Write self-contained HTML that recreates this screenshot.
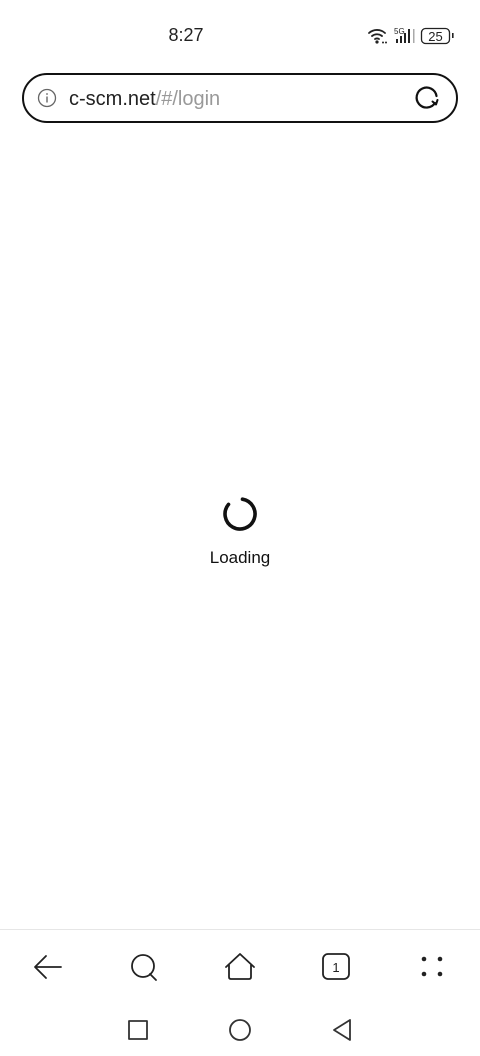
<!DOCTYPE html>
<html><head><meta charset="utf-8"><style>
html,body{margin:0;padding:0;background:#fff;}
body{width:480px;height:1056px;position:relative;overflow:hidden;font-family:"Liberation Sans",sans-serif;color:#111;}
.abs{position:absolute;}
</style></head><body>
<div class="abs" style="left:160px;top:25px;width:52px;text-align:center;font-size:18px;color:#222;">8:27</div>
<svg class="abs" style="left:366px;top:24px" width="92" height="22" viewBox="0 0 92 22">
 <g fill="none" stroke="#222" stroke-width="1.8" stroke-linecap="round">
  <path d="M3 9 A12 12 0 0 1 19 9"/><path d="M6 12 A8 8 0 0 1 16 12"/><path d="M9 15 A4 4 0 0 1 13 15"/>
 </g>
 <circle cx="11" cy="18" r="1.6" fill="#222"/><circle cx="17" cy="18.5" r="1" fill="#222"/><circle cx="20" cy="18.5" r="1" fill="#222"/>
 <text x="28" y="10" font-size="8" font-family="Liberation Sans" fill="#222">5G</text>
 <rect x="30" y="15" width="2" height="4" fill="#222"/><rect x="34" y="12" width="2" height="7" fill="#222"/><rect x="38" y="9" width="2" height="10" fill="#222"/><rect x="42" y="5" width="2" height="14" fill="#222"/>
 <rect x="47" y="5" width="1.5" height="14" fill="#aaa"/>
 <rect x="55.5" y="4.5" width="28" height="15" rx="4" fill="none" stroke="#222" stroke-width="1.3"/>
 <text x="69.5" y="17" font-size="13" text-anchor="middle" font-family="Liberation Sans" fill="#222">25</text>
 <rect x="86" y="9" width="1.6" height="5" fill="#222"/>
</svg>
<div class="abs" style="left:22px;top:73px;width:432px;height:46px;border:2px solid #111;border-radius:25px;"></div>
<svg class="abs" style="left:37px;top:88px" width="20" height="20" viewBox="0 0 20 20">
 <circle cx="10" cy="10" r="8.5" fill="none" stroke="#666" stroke-width="1.3"/>
 <rect x="9.3" y="8.5" width="1.4" height="6" fill="#666"/><circle cx="10" cy="6" r="0.9" fill="#666"/>
</svg>
<div class="abs" style="left:69px;top:88px;font-size:20px;color:#222;">c-scm.net<span style="color:#999">/#/login</span></div>
<svg class="abs" style="left:413px;top:84px" width="28" height="28" viewBox="0 0 28 28">
 <path d="M22 19 A10 10 0 1 1 23.5 12" fill="none" stroke="#111" stroke-width="2.2" stroke-linecap="round"/>
 <path d="M19.5 17.5 L23 20.5 L24.5 16" fill="none" stroke="#111" stroke-width="2" stroke-linecap="round" stroke-linejoin="round"/>
</svg>
<svg class="abs" style="left:220px;top:494px" width="40" height="40" viewBox="0 0 40 40">
 <path d="M22.5 5.2 A15 15 0 1 1 8.5 10.4" fill="none" stroke="#111" stroke-width="3.6" stroke-linecap="round"/>
</svg>
<div class="abs" style="left:180px;top:548px;width:120px;text-align:center;font-size:17px;color:#111;">Loading</div>
<div class="abs" style="left:0;top:929px;width:480px;height:1px;background:#e6e6e6;"></div>
<svg class="abs" style="left:0;top:945px" width="480" height="45" viewBox="0 0 480 45">
 <g fill="none" stroke="#222" stroke-width="1.8" stroke-linecap="round" stroke-linejoin="round">
  <path d="M35 22 H61 M46 11 L35 22 L46 33"/>
  <circle cx="143" cy="21" r="11"/><path d="M150 29 L156 35"/>
  <path d="M226 22 L240 9 L254 22 M229 20 V32 Q229 34 231 34 H249 Q251 34 251 32 V20"/>
  <rect x="323" y="9" width="26" height="25" rx="5"/>
  </g>
 <text x="336" y="27" font-size="13" text-anchor="middle" font-family="Liberation Sans" fill="#222">1</text>
 <g fill="#222"><circle cx="424" cy="14" r="2.3"/><circle cx="440" cy="14" r="2.3"/><circle cx="424" cy="29" r="2.3"/><circle cx="440" cy="29" r="2.3"/></g>
</svg>
<svg class="abs" style="left:0;top:1010px" width="480" height="40" viewBox="0 0 480 40">
 <g fill="none" stroke="#333" stroke-width="1.8" stroke-linejoin="round">
  <rect x="129" y="11" width="18" height="18"/>
  <circle cx="240" cy="20" r="10"/>
  <path d="M350 10 V30 L334 20 Z"/>
 </g>
</svg>
</body></html>
